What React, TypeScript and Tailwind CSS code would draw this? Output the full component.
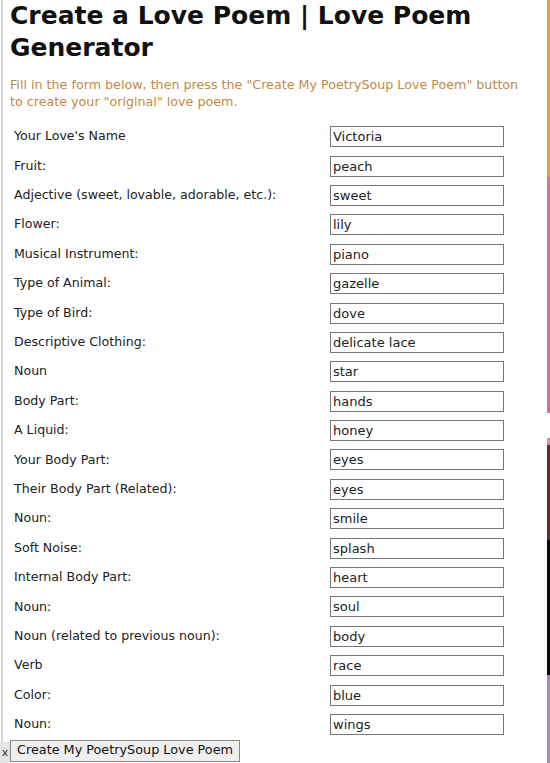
import React from 'react'

const fields: [string, string][] = [
  ["Your Love's Name", 'Victoria'],
  ['Fruit:', 'peach'],
  ['Adjective (sweet, lovable, adorable, etc.):', 'sweet'],
  ['Flower:', 'lily'],
  ['Musical Instrument:', 'piano'],
  ['Type of Animal:', 'gazelle'],
  ['Type of Bird:', 'dove'],
  ['Descriptive Clothing:', 'delicate lace'],
  ['Noun', 'star'],
  ['Body Part:', 'hands'],
  ['A Liquid:', 'honey'],
  ['Your Body Part:', 'eyes'],
  ['Their Body Part (Related):', 'eyes'],
  ['Noun:', 'smile'],
  ['Soft Noise:', 'splash'],
  ['Internal Body Part:', 'heart'],
  ['Noun:', 'soul'],
  ['Noun (related to previous noun):', 'body'],
  ['Verb', 'race'],
  ['Color:', 'blue'],
  ['Noun:', 'wings'],
]

export default function App() {
  return (
    <div className="relative w-[550px] h-[763px] overflow-hidden bg-white font-['DejaVu_Sans',sans-serif]">
      {/* left page border */}
      <div className="absolute left-[1px] top-0 bottom-0 w-[2px] bg-[#d4d4d4]" />

      {/* right side strip (neighbouring column peeking in) */}
      <div className="absolute right-0 top-0 w-[3px] h-full flex flex-col">
        <div className="h-[177px] bg-[#dca535]" />
        <div className="h-[236px] bg-[#d8709f]" />
        <div className="h-[25px] bg-white" />
        <div className="h-[7px] bg-[#d88aa8]" />
        <div className="h-[95px] bg-[#6a2a22]" />
        <div className="h-[135px] bg-[#0a0a0a]" />
        <div className="flex-1 bg-[#a68bb8]" />
      </div>

      <div className="pl-[10px] pr-[12px]">
        <h1 className="text-[25px] leading-[32px] font-bold text-[#111]">
          Create a Love Poem | Love Poem Generator
        </h1>
        <p className="mt-[12px] w-[512px] text-[12.7px] leading-[17px] text-[#c08a45]">
          Fill in the form below, then press the "Create My PoetrySoup Love Poem" button to create your "original" love poem.
        </p>

        <div className="mt-[12px]">
          {fields.map(([label, value], i) => (
            <div key={i} className="flex items-center h-[29.4px]">
              <div className="w-[320px] pl-[4px] text-[12.6px] text-[#222]">{label}</div>
              <input
                readOnly
                value={value}
                className="w-[174px] h-[21px] border border-[#777] px-[2px] text-[13px] text-[#222] outline-none"
              />
            </div>
          ))}
        </div>

        <div className="-mt-[2px]">
          <button className="h-[22px] px-[6px] border border-[#888] bg-[#efefef] text-[12.8px] text-[#111] leading-none">
            Create My PoetrySoup Love Poem
          </button>
        </div>
      </div>

      {/* small close tab bottom-left */}
      <div className="absolute left-0 bottom-0 w-[10px] h-[21px] bg-[#e4e4e4] text-[11px] leading-[21px] text-[#333] text-center">
        x
      </div>
    </div>
  )
}
